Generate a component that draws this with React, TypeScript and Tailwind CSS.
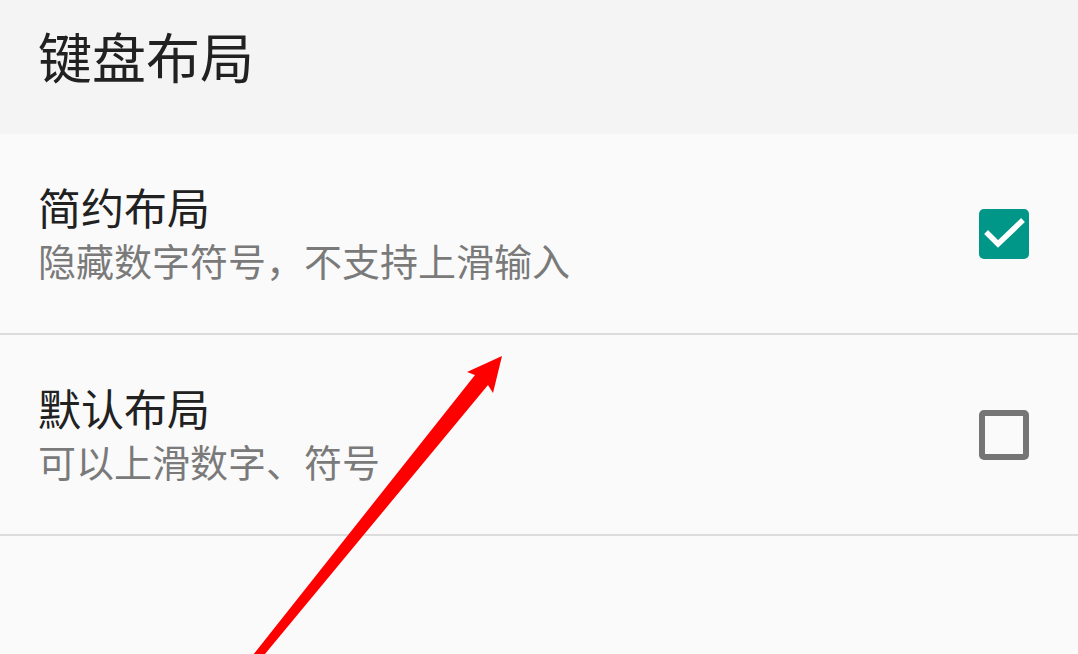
const font = "font-['Noto_Sans_CJK_SC','Noto_Sans',sans-serif]";

function Checkbox({ checked }: { checked: boolean }) {
  if (checked) {
    return (
      <div className="w-[50px] h-[50px] rounded-[5px] bg-[#009688] flex-shrink-0">
        <svg viewBox="0 0 50 50" className="w-[50px] h-[50px]">
          <path d="M9 25 L19 35 L42 13" fill="none" stroke="#ffffff" strokeWidth="5.5" strokeLinecap="square" />
        </svg>
      </div>
    );
  }
  return <div className="w-[50px] h-[50px] rounded-[5px] border-[6px] border-[#757575] flex-shrink-0" />;
}

function LayoutRow({ title, desc, checked }: { title: string; desc: string; checked: boolean }) {
  return (
    <div className="flex items-center justify-between h-[201px] border-b-2 border-[#dcdcdc] pl-[38px] pr-[49px]">
      <div className="flex flex-col pb-[4px]">
        <span className="text-[43px] leading-[56px] text-[#212121]">{title}</span>
        <span className="text-[38px] leading-[52px] text-[#7a7a7a]">{desc}</span>
      </div>
      <Checkbox checked={checked} />
    </div>
  );
}

export default function App() {
  return (
    <div className={`relative w-[1078px] h-[654px] overflow-hidden bg-[#fafafa] ${font}`}>
      {/* Header */}
      <div className="h-[134px] bg-[#f4f4f4] pl-[38px] pt-[22px]">
        <h1 className="text-[54px] leading-[68px] text-[#212121]">键盘布局</h1>
      </div>

      {/* Options */}
      <LayoutRow title="简约布局" desc="隐藏数字符号，不支持上滑输入" checked={true} />
      <LayoutRow title="默认布局" desc="可以上滑数字、符号" checked={false} />

      {/* Annotation arrow */}
      <svg
        className="absolute inset-0 pointer-events-none"
        width="1078"
        height="654"
        viewBox="0 0 1078 654"
      >
        <polygon
          points="502,356 493,393 488,385 260,660 249,660 475,375 467,372"
          fill="#ff0000"
        />
      </svg>
    </div>
  );
}
